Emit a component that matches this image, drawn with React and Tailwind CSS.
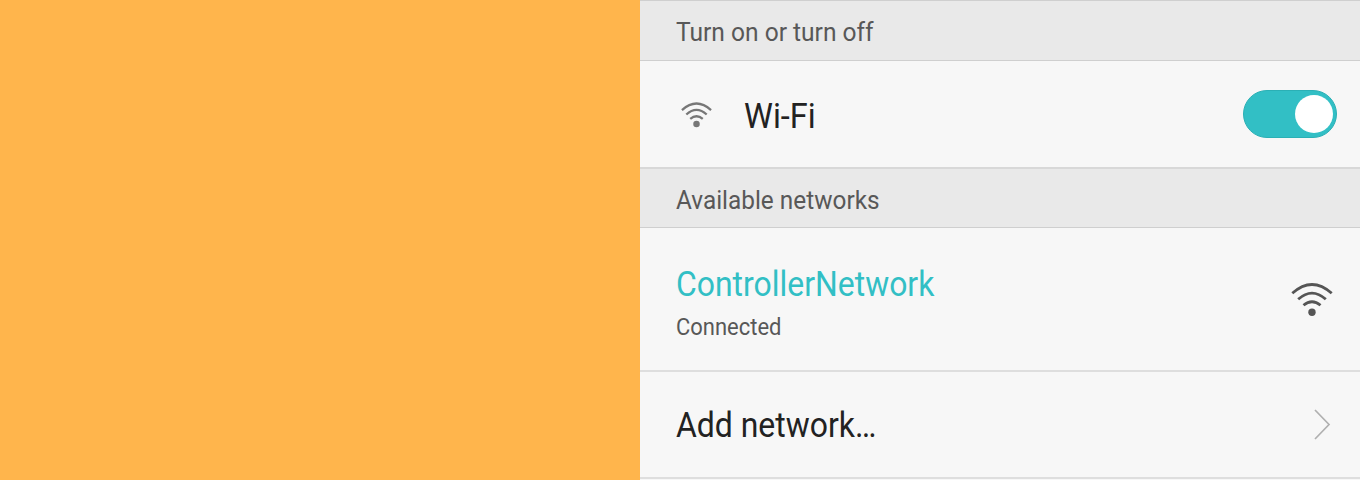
const Wifi = ({ className, color, stroke, dot }) => (
  <svg className={className} viewBox="0 0 42 34" fill="none" stroke={color} strokeWidth={stroke}>
    <path d="M1.3 10.3Q21 -7.3 40.7 10.3" />
    <path d="M7.2 16.3Q21 3.9 34.8 16.3" />
    <path d="M12.5 22.3Q21 15.1 29.5 22.3" />
    <circle cx="21" cy="29.2" r={dot} fill={color} stroke="none" />
  </svg>
);

export default function App() {
  return (
    <div className="flex h-[480px] w-[1360px] overflow-hidden bg-[#ffb54c] font-['Roboto',sans-serif]">
      <div className="w-[640px] shrink-0" />
      <main className="flex w-[720px] flex-col bg-[#f7f7f7]">
        <header className="flex h-[61px] shrink-0 items-center border-y border-[#cfcfcf] bg-[#e9e9e9] pl-9 pt-0.5">
          <span className="origin-left scale-x-[0.944] whitespace-nowrap text-[26px] leading-8 text-[#585858]">Turn on or turn off</span>
        </header>
        <section className="flex h-[106px] shrink-0 items-center pl-[41px] pr-[23px]">
          <Wifi className="mt-px h-[26px] w-[31px]" color="#777777" stroke="3.1" dot="4.4" />
          <span className="ml-8 mt-1.5 origin-left scale-x-[0.93] text-[35px] leading-10 text-[#222222]">Wi-Fi</span>
          <div className="ml-auto flex h-12 w-[94px] items-center justify-end rounded-full border border-[#2bb0b5] bg-[#32bfc5] pr-[3px]">
            <div className="size-[38px] rounded-full bg-white" />
          </div>
        </section>
        <header className="flex h-[61px] shrink-0 items-center border-b border-t-2 border-b-[#cfcfcf] border-t-[#d8d8d8] bg-[#e9e9e9] pl-9 pt-[3px]">
          <span className="origin-left scale-x-[0.937] whitespace-nowrap text-[26px] leading-8 text-[#585858]">Available networks</span>
        </header>
        <section className="flex h-[144px] shrink-0 items-center border-b-2 border-[#dedede] pl-9 pr-[27px]">
          <div className="flex flex-col pt-2.5">
            <span className="origin-left scale-x-[0.912] text-[35px] leading-10 text-[#32bfc5]">ControllerNetwork</span>
            <span className="mt-[7px] origin-left scale-x-[0.955] text-[23px] leading-8 text-[#585858]">Connected</span>
          </div>
          <Wifi className="ml-auto mt-0.5 h-[34px] w-[42px]" color="#555555" stroke="2.8" dot="3.7" />
        </section>
        <section className="flex h-[107px] shrink-0 items-center border-b-2 border-[#dedede] pl-9 pr-[29px]">
          <span className="mt-[3px] origin-left scale-x-[0.912] text-[35px] leading-10 text-[#222222]">Add network…</span>
          <svg className="mb-px ml-auto h-[31px] w-[18px]" viewBox="0 0 18 31" fill="none" stroke="#b0b0b0" strokeWidth="1.7">
            <path d="M2 1l14 14.5L2 30" />
          </svg>
        </section>
      </main>
    </div>
  );
}
